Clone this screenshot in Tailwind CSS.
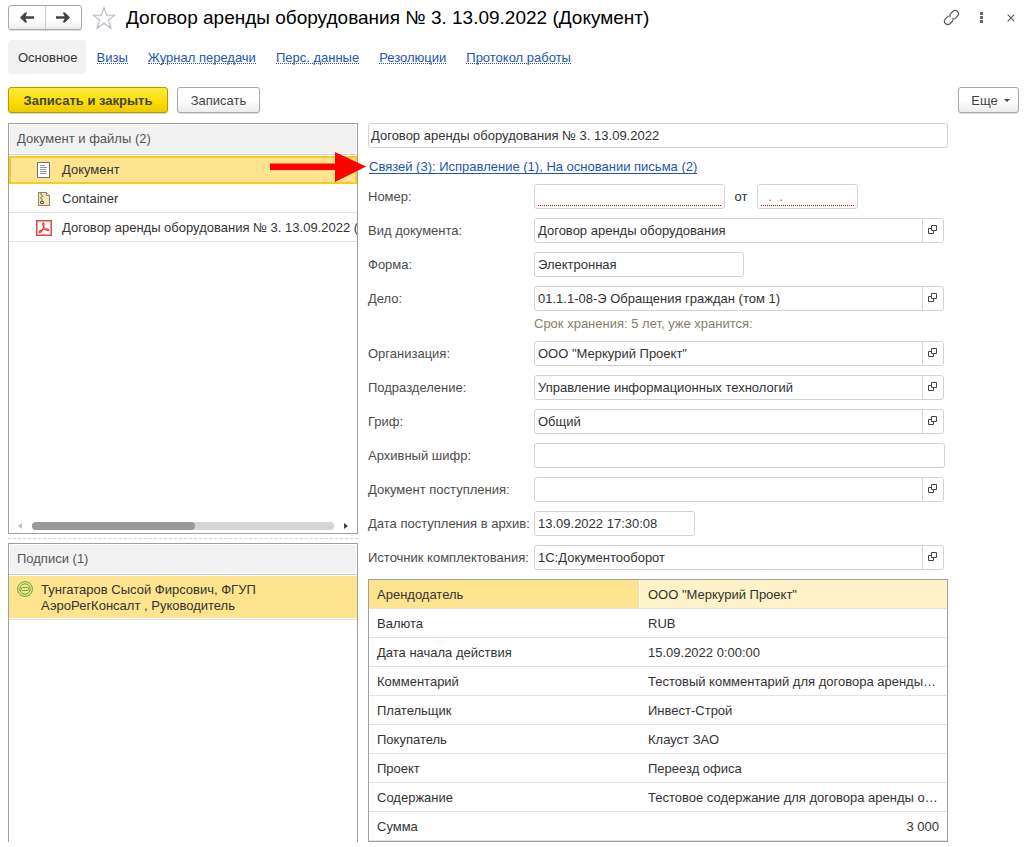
<!DOCTYPE html>
<html lang="ru">
<head>
<meta charset="utf-8">
<title>Договор аренды оборудования № 3. 13.09.2022 (Документ)</title>
<script src="https://cdn.jsdelivr.net/npm/@tailwindcss/browser@4"></script>
</head>
<body class="flex min-h-screen flex-col bg-white pt-[5px] pr-[6px] pb-[5px] pl-2 font-['Liberation_Sans',Arial,sans-serif] text-[13px] leading-4 text-[#333]">
<svg class="hidden" aria-hidden="true">
  <symbol id="open" viewBox="0 0 10 10"><path d="M3.5 .5h5v5h-5zM3 3.500H.5v5h5V6" fill="none" stroke="#444" stroke-width="1"/></symbol>
</svg>

<header class="flex h-[25px] items-center">
  <div class="flex h-[25px] w-[74px] shrink-0 overflow-hidden rounded-[3px] border border-[#a8a8a8] bg-linear-to-b from-white from-60% to-[#ececec] shadow-[0_1px_0_#ddd]">
    <button class="flex flex-1 items-center justify-center border-r border-[#ccc]" aria-label="Назад"><svg class="h-[11px] w-[14px]" viewBox="0 0 14 11"><path d="M14 5.5H3" stroke="#444" stroke-width="2.400"/><path d="M0 5.500 5 .5h2.200L5 5.500l2.200 5H5z" fill="#444"/></svg></button>
    <button class="flex flex-1 items-center justify-center" aria-label="Вперед"><svg class="h-[11px] w-[14px]" viewBox="0 0 14 11"><path d="M0 5.500h11" stroke="#444" stroke-width="2.400"/><path d="M14 5.500 9 .5H6.800L9 5.500l-2.200 5H9z" fill="#444"/></svg></button>
  </div>
  <button class="ml-[10px] shrink-0" aria-label="В избранное"><svg class="h-6 w-6" viewBox="0 0 24 24"><path d="M12 1.6l2.800 7.600h8.100l-6.500 4.900 2.500 8.200-6.900-5-6.900 5 2.500-8.200L1.100 9.200h8.100z" fill="none" stroke="#b4b9c0" stroke-width="1.100"/></svg></button>
  <h1 class="ml-[10px] flex-1 truncate text-[19px] leading-6 text-black">Договор аренды оборудования № 3. 13.09.2022 (Документ)</h1>
  <div class="flex items-center pr-1">
    <button aria-label="Ссылка"><svg class="h-[17px] w-[17px]" viewBox="0 0 17 17"><g transform="rotate(-45 8.5 8.5)" fill="none" stroke="#555" stroke-width="1.2"><path d="M7.6 5.2H3.3a3.3 3.3 0 0 0 0 6.6h2.9a3.3 3.3 0 0 0 3-2.2M9.4 11.8h4.3a3.3 3.3 0 0 0 0-6.6h-2.9a3.3 3.3 0 0 0-3 2.2"/></g></svg></button>
    <button class="ml-[19px]" aria-label="Меню"><svg class="h-[11px] w-[5px]" viewBox="0 0 5 11"><path d="M1 0h3v3H1zM1 4h3v3H1zM1 8h3v3H1z" fill="#666"/></svg></button>
    <button class="ml-[23px]" aria-label="Закрыть"><svg class="h-2 w-2" viewBox="0 0 8 8"><path d="M.7.7l6.6 6.6M7.3.7.7 7.3" stroke="#555" stroke-width="1.1"/></svg></button>
  </div>
</header>

<nav class="mt-[10px] flex items-center text-[#2255b0]">
  <a href="#" class="mr-[11px] flex h-[34px] items-center rounded-[4px] bg-[#f2f2f2] pt-px pr-2 pl-[10px] text-[#333]">Основное</a>
  <div class="flex gap-5">
    <a href="#" class="border-b border-dotted border-[#2255b0] pt-[2px] leading-[11px]">Визы</a>
    <a href="#" class="border-b border-dotted border-[#2255b0] pt-[2px] leading-[11px]">Журнал передачи</a>
    <a href="#" class="border-b border-dotted border-[#2255b0] pt-[2px] leading-[11px]">Перс. данные</a>
    <a href="#" class="border-b border-dotted border-[#2255b0] pt-[2px] leading-[11px]">Резолюции</a>
    <a href="#" class="border-b border-dotted border-[#2255b0] pt-[2px] leading-[11px]">Протокол работы</a>
  </div>
</nav>

<div class="mt-[13px] flex h-[26px] items-stretch gap-[9px]">
  <button class="w-[160px] rounded-[3px] border border-[#b09c00] bg-linear-to-b from-[#ffe838] via-[#ffe000] to-[#edcb00] pt-px font-bold text-[#444] shadow-[0_1px_0_#ddd]">Записать и закрыть</button>
  <button class="w-[83px] rounded-[3px] border border-[#a8a8a8] bg-linear-to-b from-white from-50% to-[#ececec] pt-px text-[#444] shadow-[0_1px_0_#ddd]">Записать</button>
  <button class="ml-auto flex w-[61px] items-center justify-center gap-[6px] rounded-[3px] border border-[#a8a8a8] bg-linear-to-b from-white from-50% to-[#ececec] pt-px pl-1 text-[#444] shadow-[0_1px_0_#ddd]">Еще<svg class="h-[3px] w-[6px]" viewBox="0 0 6 3"><path d="M0 0h6L3 3z" fill="#444"/></svg></button>
</div>

<main class="relative mt-[10px] flex flex-1 gap-[10px]">
  <div class="flex w-[350px] shrink-0 flex-col">
    <section class="flex flex-[411_1_0] flex-col overflow-hidden border border-[#a0a0a0]">
      <h2 class="m-px flex h-[28px] shrink-0 items-center bg-[#f2f2f2] px-[7px] text-[#555]">Документ и файлы (2)</h2>
      <div class="border-t border-[#d0d0d0] pt-px whitespace-nowrap">
        <div class="flex h-[28px] items-center border-2 border-[#fbca1f] bg-[#fee48f] pl-[25px]">
          <svg class="mr-[11px] h-4 w-[15px] shrink-0" viewBox="0 0 15 16"><path d="M1.5.5h12v15h-12z" fill="#fff" stroke="#68757d"/><path d="M4 3.5h5M4 5.5h7M4 7.5h6M4 9.5h7M4 11.5h6" stroke="#8b959a"/></svg>Документ</div>
        <div class="flex h-[29px] items-center border-b border-[#e2e2e2] pt-px pl-[27px]">
          <svg class="mr-[11px] h-4 w-[15px] shrink-0" viewBox="0 0 15 16"><path d="M2.5 1.5h8l3 3v10h-11z" fill="#f1e8b8" stroke="#8c8358"/><path d="M10.500 1.500v3h3" fill="#fff" stroke="#8c8358"/><path d="M4 3h2M5 5h2M4 7h2M5 9h2" stroke="#6d6540"/><path d="M4.500 10.500h3v2h-3z" fill="#fff" stroke="#6d6540"/></svg>Container</div>
        <div class="flex h-[29px] items-center border-b border-[#e2e2e2] pt-px pl-[27px]">
          <svg class="mr-[10px] h-4 w-4 shrink-0" viewBox="0 0 16 16"><path d="M.8.800h14.400v14.400H.8z" fill="#fff" stroke="#e2463c" stroke-width="1.500"/><path d="M6.800 3c1.600-.8 1.500 2.200.7 4.200C6.700 9.300 5 12.200 3.600 12.900c-1.200-.5-.4-2.300 2.300-3.200 2.200-.7 5.500-1 6.700-.2.900 1-.9 1.700-2.400.5C8.400 8.600 5.900 4.900 6.800 3z" fill="none" stroke="#e2463c" stroke-width="1.200"/></svg>Договор аренды оборудования № 3. 13.09.2022 (Документ)</div>
      </div>
      <div class="mt-auto flex h-[15px] items-center px-[9px]">
        <svg class="h-[6px] w-1" viewBox="0 0 4 6"><path d="M4 0v6L0 3z" fill="#c0c0c0"/></svg>
        <div class="mx-[10px] h-2 flex-1 rounded-full bg-[#d5d5d5]"><div class="h-2 w-[54%] rounded-full bg-[#999]"></div></div>
        <svg class="h-[6px] w-1" viewBox="0 0 4 6"><path d="M0 0v6l4-3z" fill="#444"/></svg>
      </div>
    </section>
    <div class="my-1 border-t border-dashed border-[#d0d0d0]"></div>
    <section class="flex-[299_1_0] border border-b-0 border-[#a0a0a0]">
      <h2 class="m-px flex h-[28px] items-center bg-[#f2f2f2] px-[7px] text-[#555]">Подписи (1)</h2>
      <div class="border-y border-t-[#c8c8c8] border-b-[#e2e2e2] pt-px pb-px">
        <div class="flex h-[42px] items-start bg-[#fee48f] pt-[5px] pl-2">
          <svg class="mr-2 h-4 w-4 shrink-0" viewBox="0 0 16 16" fill="none" stroke="#58a83c"><circle cx="8" cy="8" r="7.400"/><circle cx="8" cy="8" r="5.200"/><rect x="4.500" y="6.500" width="7" height="3" rx="1"/></svg>
          <p class="pt-px">Тунгатаров Сысой Фирсович, ФГУП<br>АэроРегКонсалт , Руководитель</p>
        </div>
      </div>
    </section>
  </div>

  <form class="mr-[71px] flex min-w-0 flex-1 flex-col gap-[9px]">
    <input aria-label="Наименование" class="h-[25px] w-full rounded-[3px] border border-[#d2d2d2] px-[2px]" value="Договор аренды оборудования № 3. 13.09.2022">
    <div class="flex h-[18px] items-center"><a href="#" class="ml-px border-b border-[#2255b0] pt-[2px] leading-[12px] text-[#2255b0]">Связей (3): Исправление (1), На основании письма (2)</a></div>
    <div class="flex">
      <label for="num" class="w-[166px] shrink-0 leading-[25px] text-[#4c4c4c]">Номер:</label>
      <div class="flex h-[25px] w-[191px] rounded-[3px] border border-[#d2d2d2] px-[3px] pb-[2px]"><input id="num" class="w-full border-b border-dotted border-[#d00000]"></div>
      <label for="date" class="w-8 text-center leading-[25px]">от</label>
      <div class="flex h-[25px] w-[101px] rounded-[3px] border border-[#d2d2d2] px-[3px] pb-[2px]"><input id="date" class="w-full border-b border-dotted border-[#d00000] px-1 pt-[3px] whitespace-pre text-[#8a7040]" value="&nbsp;.&nbsp;&nbsp;."></div>
    </div>
    <div class="flex pr-1">
      <label for="kind" class="w-[166px] shrink-0 leading-[25px] text-[#4c4c4c]">Вид документа:</label>
      <div class="flex h-[25px] flex-1 rounded-[3px] border border-[#d2d2d2]"><input id="kind" class="min-w-0 flex-1 px-[3px]" value="Договор аренды оборудования"><button type="button" aria-label="Открыть" class="flex w-[21px] items-center justify-center border-l border-[#d2d2d2] pb-px"><svg class="h-[10px] w-[10px]"><use href="#open"/></svg></button></div>
    </div>
    <div class="flex">
      <label for="formkind" class="w-[166px] shrink-0 leading-[25px] text-[#4c4c4c]">Форма:</label>
      <input id="formkind" class="h-[25px] w-[210px] rounded-[3px] border border-[#d2d2d2] px-[3px]" value="Электронная">
    </div>
    <div class="flex pr-1">
      <label for="case" class="w-[166px] shrink-0 leading-[25px] text-[#4c4c4c]">Дело:</label>
      <div class="min-w-0 flex-1">
        <div class="flex h-[25px] rounded-[3px] border border-[#d2d2d2]"><input id="case" class="min-w-0 flex-1 px-[3px]" value="01.1.1-08-Э Обращения граждан (том 1)"><button type="button" aria-label="Открыть" class="flex w-[21px] items-center justify-center border-l border-[#d2d2d2] pb-px"><svg class="h-[10px] w-[10px]"><use href="#open"/></svg></button></div>
        <p class="mt-[5px] text-[#86806a]">Срок хранения: 5 лет, уже хранится:</p>
      </div>
    </div>
    <div class="flex pr-1">
      <label for="org" class="w-[166px] shrink-0 leading-[25px] text-[#4c4c4c]">Организация:</label>
      <div class="flex h-[25px] flex-1 rounded-[3px] border border-[#d2d2d2]"><input id="org" class="min-w-0 flex-1 px-[3px]" value="ООО &quot;Меркурий Проект&quot;"><button type="button" aria-label="Открыть" class="flex w-[21px] items-center justify-center border-l border-[#d2d2d2] pb-px"><svg class="h-[10px] w-[10px]"><use href="#open"/></svg></button></div>
    </div>
    <div class="flex pr-1">
      <label for="dept" class="w-[166px] shrink-0 leading-[25px] text-[#4c4c4c]">Подразделение:</label>
      <div class="flex h-[25px] flex-1 rounded-[3px] border border-[#d2d2d2]"><input id="dept" class="min-w-0 flex-1 px-[3px]" value="Управление информационных технологий"><button type="button" aria-label="Открыть" class="flex w-[21px] items-center justify-center border-l border-[#d2d2d2] pb-px"><svg class="h-[10px] w-[10px]"><use href="#open"/></svg></button></div>
    </div>
    <div class="flex pr-1">
      <label for="access" class="w-[166px] shrink-0 leading-[25px] text-[#4c4c4c]">Гриф:</label>
      <div class="flex h-[25px] flex-1 rounded-[3px] border border-[#d2d2d2]"><input id="access" class="min-w-0 flex-1 px-[3px]" value="Общий"><button type="button" aria-label="Открыть" class="flex w-[21px] items-center justify-center border-l border-[#d2d2d2] pb-px"><svg class="h-[10px] w-[10px]"><use href="#open"/></svg></button></div>
    </div>
    <div class="flex pr-[3px]">
      <label for="code" class="w-[166px] shrink-0 leading-[25px] text-[#4c4c4c]">Архивный шифр:</label>
      <input id="code" class="h-[25px] min-w-0 flex-1 rounded-[3px] border border-[#d2d2d2] px-[3px]">
    </div>
    <div class="flex pr-1">
      <label for="income" class="w-[166px] shrink-0 leading-[25px] text-[#4c4c4c]">Документ поступления:</label>
      <div class="flex h-[25px] flex-1 rounded-[3px] border border-[#d2d2d2]"><input id="income" class="min-w-0 flex-1 px-[3px]"><button type="button" aria-label="Открыть" class="flex w-[21px] items-center justify-center border-l border-[#d2d2d2] pb-px"><svg class="h-[10px] w-[10px]"><use href="#open"/></svg></button></div>
    </div>
    <div class="flex">
      <label for="arch" class="w-[166px] shrink-0 leading-[25px] text-[#4c4c4c]">Дата поступления в архив:</label>
      <input id="arch" class="h-[25px] w-[161px] rounded-[3px] border border-[#d2d2d2] px-[3px]" value="13.09.2022 17:30:08">
    </div>
    <div class="flex pr-1">
      <label for="source" class="w-[166px] shrink-0 leading-[25px] text-[#4c4c4c]">Источник комплектования:</label>
      <div class="flex h-[25px] flex-1 rounded-[3px] border border-[#d2d2d2]"><input id="source" class="min-w-0 flex-1 px-[3px]" value="1С:Документооборот"><button type="button" aria-label="Открыть" class="flex w-[21px] items-center justify-center border-l border-[#d2d2d2] pb-px"><svg class="h-[10px] w-[10px]"><use href="#open"/></svg></button></div>
    </div>
    <div class="border border-[#a0a0a0]">
      <table class="w-full table-fixed border-separate border-spacing-0 [&_td]:h-[29px] [&_td]:truncate [&_td]:border-b [&_td]:border-[#e2e2e2] [&_td]:px-2 [&_td]:pt-[2px] [&_th]:h-[29px] [&_th]:border-b [&_th]:border-[#e2e2e2] [&_th]:px-2 [&_th]:pt-[2px] [&_th]:text-left [&_th]:font-normal">
        <colgroup><col class="w-[271px]"><col></colgroup>
        <tbody>
          <tr><th scope="row" class="border-r border-r-white! bg-[#fee48f]">Арендодатель</th><td class="bg-[#fdf2c8]">ООО "Меркурий Проект"</td></tr>
          <tr><th scope="row">Валюта</th><td>RUB</td></tr>
          <tr><th scope="row">Дата начала действия</th><td>15.09.2022 0:00:00</td></tr>
          <tr><th scope="row">Комментарий</th><td>Тестовый комментарий для договора аренды оборудования</td></tr>
          <tr><th scope="row">Плательщик</th><td>Инвест-Строй</td></tr>
          <tr><th scope="row">Покупатель</th><td>Клауст ЗАО</td></tr>
          <tr><th scope="row">Проект</th><td>Переезд офиса</td></tr>
          <tr><th scope="row">Содержание</th><td>Тестовое содержание для договора аренды оборудования</td></tr>
          <tr><th scope="row">Сумма</th><td class="text-right">3 000</td></tr>
        </tbody>
      </table>
    </div>
  </form>

  <!-- Callout arrow pointing at the relations link -->
  <svg class="pointer-events-none absolute top-[29px] left-[262px] h-[30px] w-[96px]" viewBox="0 0 96 30"><path d="M0 11.500h65V0l31 14.500L65 30V18H0z" fill="#f00"/></svg>
</main>
</body>
</html>
